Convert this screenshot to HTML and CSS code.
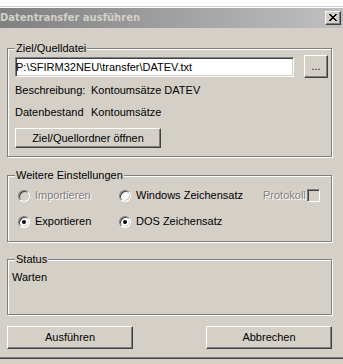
FILE: index.html
```html
<!DOCTYPE html>
<html lang="de">
<head>
<meta charset="utf-8">
<title>Datentransfer ausführen</title>
<link rel="stylesheet" href="styles.css">
</head>
<body>
<div class="window">
  <div class="frame-top"></div>
  <div class="titlebar">
    <span class="title">Datentransfer ausführen</span>
    <span class="close-btn">
      <svg width="8" height="7" viewBox="0 0 8 7"><path d="M0 0h2v1h-2zM6 0h2v1h-2zM1 1h2v1h-2zM5 1h2v1h-2zM2 2h4v1h-4zM3 3h2v1h-2zM2 4h4v1h-4zM1 5h2v1h-2zM5 5h2v1h-2zM0 6h2v1h-2zM6 6h2v1h-2z" fill="#000"/></svg>
    </span>
  </div>
  <div class="client">
    <fieldset class="group group-file">
      <legend>Ziel/Quelldatei</legend>
      <div class="file-row">
        <input class="path" type="text" value="P:\SFIRM32NEU\transfer\DATEV.txt">
        <button class="btn btn-browse">...</button>
      </div>
      <div class="info-row info-first"><span class="info-label">Beschreibung:</span><span>Kontoumsätze DATEV</span></div>
      <div class="info-row info-second"><span class="info-label">Datenbestand</span><span>Kontoumsätze</span></div>
      <button class="btn btn-open">Ziel/Quellordner öffnen</button>
    </fieldset>

    <fieldset class="group group-settings">
      <legend>Weitere Einstellungen</legend>
      <div class="settings-grid">
        <label class="opt disabled"><span class="radio"></span><span>Importieren</span></label>
        <label class="opt"><span class="radio"></span><span>Windows Zeichensatz</span></label>
        <label class="opt check disabled"><span>Protokoll</span><span class="checkbox"></span></label>
        <label class="opt row2"><span class="radio checked"></span><span>Exportieren</span></label>
        <label class="opt row2"><span class="radio checked"></span><span>DOS Zeichensatz</span></label>
      </div>
    </fieldset>

    <fieldset class="group group-status">
      <legend>Status</legend>
      <div class="status-text">Warten</div>
    </fieldset>

    <div class="actions">
      <button class="btn btn-action">Ausführen</button>
      <button class="btn btn-action">Abbrechen</button>
    </div>
  </div>
  <div class="frame-bottom"></div>
</div>
</body>
</html>
```

FILE: styles.css
```css
html, body {
  margin: 0;
  padding: 0;
}
body {
  background: #d4d0c8;
  font-family: "Liberation Sans", Arial, sans-serif;
  font-size: 11px;
  line-height: 13px;
  color: #000;
  width: 343px;
  height: 364px;
  overflow: hidden;
}
.window {
  width: 343px;
}
.frame-top {
  height: 8px;
  background: linear-gradient(#ffffff 0 6px, #d4d0c8 6px 7px, #ffffff 7px);
}
.titlebar {
  height: 20px;
  background: linear-gradient(to right, #808080, #c0c0c0);
  display: flex;
  align-items: center;
  justify-content: space-between;
}
.title {
  font-family: "DejaVu Sans", Verdana, sans-serif;
  font-weight: bold;
  color: #d4d0c8;
  font-size: 10px;
  line-height: 20px;
  white-space: nowrap;
}
.close-btn {
  width: 16px;
  height: 14px;
  box-sizing: border-box;
  margin-right: 2px;
  background: #d4d0c8;
  border: 1px solid;
  border-color: #ffffff #404040 #404040 #ffffff;
  box-shadow: inset -1px -1px 0 #808080;
  display: flex;
  align-items: center;
  justify-content: center;
}
.close-btn svg {
  display: block;
  margin-left: -1px;
  margin-top: -1px;
}
.client {
  padding: 14px 0 0 7px;
  width: 325px;
}
.group {
  margin: 0;
  box-sizing: border-box;
  width: 325px;
  min-width: 0;
  padding: 0 3px 8px 7px;
  border: 1px solid #808080;
  box-shadow: inset 1px 1px 0 #ffffff, 1px 1px 0 #ffffff;
}
.group legend {
  padding: 0 1px;
  margin: 0;
  background: #d4d0c8;
  line-height: 13px;
}
.file-row {
  display: flex;
  align-items: flex-start;
}
.path {
  margin: 2px 0 0 0;
  width: 280px;
  height: 20px;
  box-sizing: border-box;
  padding: 0;
  font: inherit;
  color: #000;
  background: #fff;
  border: 1px solid;
  border-color: #808080 #ffffff #ffffff #808080;
  box-shadow: inset 1px 1px 0 #404040, inset -1px -1px 0 #d4d0c8;
  outline: none;
}
.btn {
  font: inherit;
  color: #000;
  background: #d4d0c8;
  border: 1px solid;
  border-color: #ffffff #404040 #404040 #ffffff;
  box-shadow: inset -1px -1px 0 #808080;
  box-sizing: border-box;
  padding: 0;
  margin: 0;
  line-height: 13px;
}
.btn-browse {
  margin-left: 10px;
  width: 24px;
  height: 23px;
  color: #300030;
}
.info-row {
  display: flex;
}
.info-first {
  margin-top: 6px;
}
.info-second {
  margin-top: 9px;
}
.info-label {
  width: 76px;
}
.btn-open {
  display: block;
  margin-top: 9px;
  width: 146px;
  height: 20px;
}
.group-settings {
  margin-top: 12px;
  padding-bottom: 13px;
}
.settings-grid {
  margin: 7px 0 0 3px;
  display: grid;
  grid-template-columns: 101px 144px auto;
  row-gap: 13px;
}
.opt {
  display: flex;
  align-items: center;
  height: 13px;
  white-space: nowrap;
}
.opt.disabled {
  color: #808080;
  text-shadow: 1px 1px 0 #ffffff;
}
.radio {
  position: relative;
  width: 12px;
  height: 12px;
  box-sizing: border-box;
  border-radius: 50%;
  border: 1px solid;
  border-color: #808080 #ffffff #ffffff #808080;
  box-shadow: inset 1px 1px 0 #404040, inset -1px -1px 0 #d4d0c8;
  background: #ffffff;
  margin-right: 5px;
  flex: none;
}
.disabled .radio {
  background: #d4d0c8;
}
.radio.checked::after {
  content: "";
  position: absolute;
  left: 3px;
  top: 3px;
  width: 4px;
  height: 4px;
  border-radius: 50%;
  background: #000;
}
.checkbox {
  width: 13px;
  height: 13px;
  box-sizing: border-box;
  margin-left: 1px;
  border: 1px solid;
  border-color: #808080 #ffffff #ffffff #808080;
  box-shadow: inset 1px 1px 0 #404040, inset -1px -1px 0 #d4d0c8;
  background: #d4d0c8;
  flex: none;
}
.group-status {
  margin-top: 11px;
  padding-bottom: 30px;
}
.status-text {
  margin: 5px 0 0 -3px;
}
.actions {
  margin-top: 11px;
  display: flex;
  justify-content: space-between;
  width: 325px;
}
.btn-action {
  width: 126px;
  height: 23px;
}
.frame-bottom {
  margin-top: 8px;
  height: 1px;
  background: #404040;
  border-top: 1px solid #808080;
}
```
